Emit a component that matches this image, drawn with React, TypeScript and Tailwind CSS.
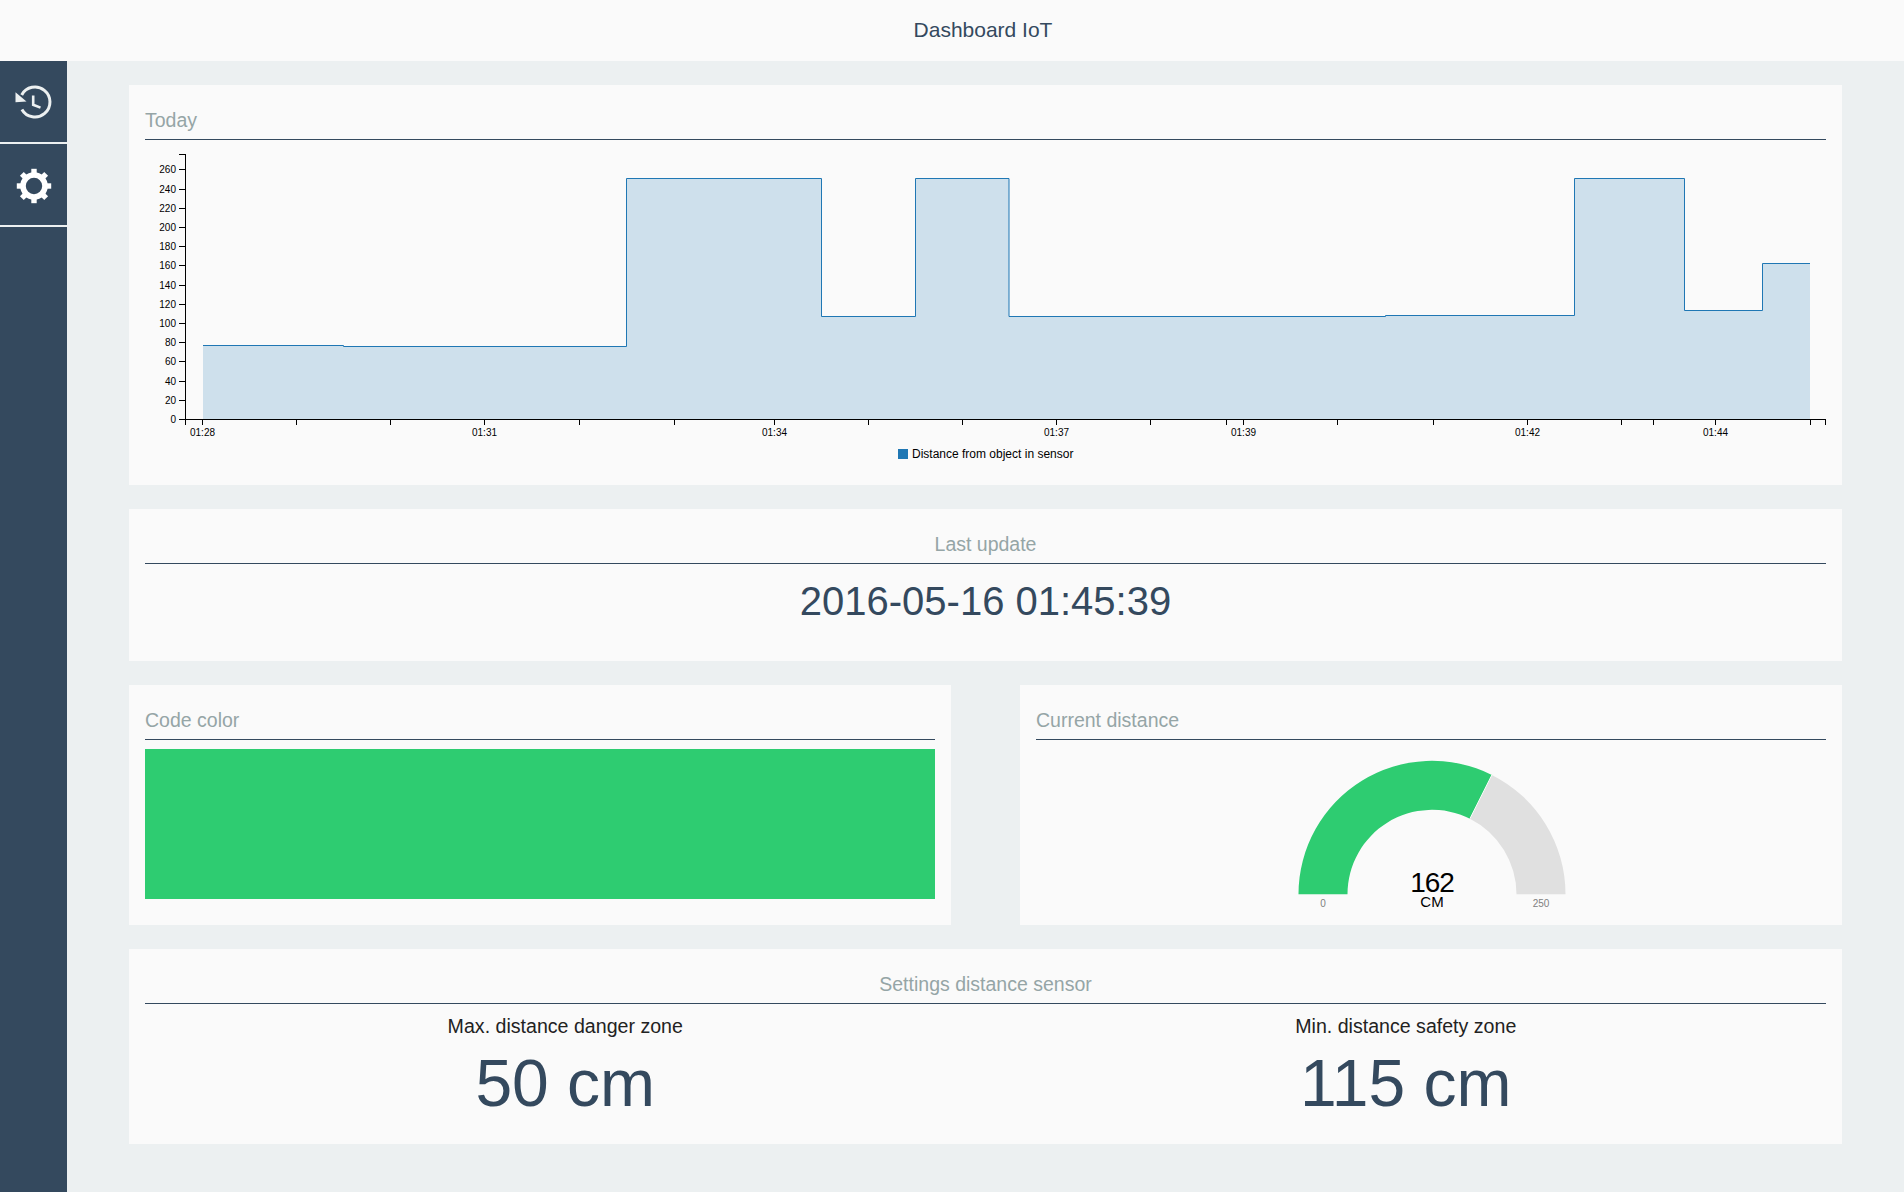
import React from "react";

const font = "font-['Liberation_Sans',Arial,sans-serif]";

// step series, in px relative to the chart svg (svg starts at x=145, y=140 on the page)
const points: [number, number][] = [
  [58, 205.5],
  [198.5, 205.5],
  [198.5, 206.5],
  [481.5, 206.5],
  [481.5, 38.5],
  [676.5, 38.5],
  [676.5, 176.5],
  [770.5, 176.5],
  [770.5, 38.5],
  [864, 38.5],
  [864, 176.5],
  [1240.5, 176.5],
  [1240.5, 175.5],
  [1429.5, 175.5],
  [1429.5, 38.5],
  [1539.5, 38.5],
  [1539.5, 170.5],
  [1617.5, 170.5],
  [1617.5, 123.5],
  [1665, 123.5],
];

const xTicks: { x: number; label?: string }[] = [
  { x: 57, label: "01:28" },
  { x: 151 },
  { x: 245 },
  { x: 339, label: "01:31" },
  { x: 434 },
  { x: 529 },
  { x: 629, label: "01:34" },
  { x: 723 },
  { x: 817 },
  { x: 911, label: "01:37" },
  { x: 1005 },
  { x: 1081 },
  { x: 1098, label: "01:39" },
  { x: 1192 },
  { x: 1288 },
  { x: 1382, label: "01:42" },
  { x: 1476 },
  { x: 1508 },
  { x: 1570, label: "01:44" },
  { x: 1665 },
];

const yValues = [0, 20, 40, 60, 80, 100, 120, 140, 160, 180, 200, 220, 240, 260];

function HistoryIcon() {
  return (
    <svg width="48" height="48" viewBox="0 0 48 48" fill="none" stroke="#ecf0f1">
      <path d="M11.7 17 A15 15 0 1 1 11.9 31.4" strokeWidth="3" />
      <path d="M5.5 14.2 L5.5 24.2 L16.5 23.5 Z" fill="#ecf0f1" stroke="none" />
      <path d="M23.2 17.5 V26.8 L30.5 29.6" strokeWidth="2.6" />
    </svg>
  );
}

function GearIcon() {
  const angles = [0, 45, 90, 135, 180, 225, 270, 315];
  return (
    <svg width="48" height="48" viewBox="0 0 48 48" fill="none" stroke="#fff">
      <circle cx="24" cy="25" r="11" strokeWidth="5.6" />
      {angles.map((a) => (
        <line
          key={a}
          x1="24"
          x2="24"
          y1="12.5"
          y2="7.8"
          strokeWidth="5.4"
          transform={`rotate(${a} 24 25)`}
        />
      ))}
    </svg>
  );
}

function CardTitle({ children, center }: { children: React.ReactNode; center?: boolean }) {
  return (
    <div className={`h-[55px] pt-[20px] border-b border-[#34495e] text-[19.5px] leading-[30px] text-[#95a5a6] ${center ? "text-center" : ""}`}>
      {children}
    </div>
  );
}

function Chart() {
  const line = points.map((p, i) => `${i === 0 ? "M" : "L"}${p[0]} ${p[1]}`).join(" ");
  const area = `${line} L1665 279 L58 279 Z`;
  return (
    <svg width="1681" height="345" className="block" fontFamily="'Liberation Sans', Arial, sans-serif">
      <path d={area} fill="#1f77b4" fillOpacity="0.2" stroke="none" />
      <path d={line} fill="none" stroke="#1f77b4" strokeWidth="1" />

      {/* y axis */}
      <path d="M34 14.5 H40.5 V279.5" fill="none" stroke="#000" shapeRendering="crispEdges" />
      {yValues.map((v) => {
        const y = Math.round(279 - v * 0.96) + 0.5;
        return (
          <g key={v}>
            <line x1="34" x2="40" y1={y} y2={y} stroke="#000" shapeRendering="crispEdges" />
            <text x="31" y={y + 3.5} fontSize="10" textAnchor="end" fill="#000">
              {v}
            </text>
          </g>
        );
      })}

      {/* x axis */}
      <path d="M40.5 285 V279.5 H1680.5 V285" fill="none" stroke="#000" shapeRendering="crispEdges" />
      {xTicks.map((t) => (
        <g key={t.x}>
          <line x1={t.x + 0.5} x2={t.x + 0.5} y1="279" y2="285" stroke="#000" shapeRendering="crispEdges" />
          {t.label && (
            <text x={t.x + 0.5} y="295.5" fontSize="10" textAnchor="middle" fill="#000">
              {t.label}
            </text>
          )}
        </g>
      ))}

      {/* legend */}
      <rect x="753" y="309" width="10" height="10" fill="#1f77b4" />
      <text x="767" y="318" fontSize="12" fill="#000">
        Distance from object in sensor
      </text>
    </svg>
  );
}

function Gauge() {
  const cx = 151;
  const cy = 154.3;
  const ro = 133.5;
  const ri = 84.5;
  const a = Math.PI * (1 - 162 / 250);
  const ox = cx + ro * Math.cos(a);
  const oy = cy - ro * Math.sin(a);
  const ix = cx + ri * Math.cos(a);
  const iy = cy - ri * Math.sin(a);
  return (
    <svg width="300" height="180" className="block mx-auto" fontFamily="'Liberation Sans', Arial, sans-serif">
      <path
        d={`M${ox} ${oy} A${ro} ${ro} 0 0 1 ${cx + ro} ${cy} L${cx + ri} ${cy} A${ri} ${ri} 0 0 0 ${ix} ${iy} Z`}
        fill="#e0e0e0"
      />
      <path
        d={`M${cx - ro} ${cy} A${ro} ${ro} 0 0 1 ${ox} ${oy} L${ix} ${iy} A${ri} ${ri} 0 0 0 ${cx - ri} ${cy} Z`}
        fill="#2ecc71"
      />
      <line x1={ox} y1={oy} x2={ix} y2={iy} stroke="#fafafa" strokeWidth="1" />
      <text x={cx} y="151.7" fontSize="28" letterSpacing="-1" textAnchor="middle" fill="#000">
        162
      </text>
      <text x={cx} y="166.7" fontSize="15" textAnchor="middle" fill="#000">
        CM
      </text>
      <text x="42" y="167" fontSize="10" textAnchor="middle" fill="#808080">
        0
      </text>
      <text x="260" y="167" fontSize="10" textAnchor="middle" fill="#808080">
        250
      </text>
    </svg>
  );
}

export default function App() {
  return (
    <div className={`min-h-[1192px] flex flex-col bg-[#ecf0f1] ${font}`}>
      <header className="h-[61px] bg-[#fafafa] pl-[67px] pb-[2px] flex items-center justify-center text-[21px] text-[#34495e]">
        <span className="-ml-[5px]">Dashboard IoT</span>
      </header>

      <div className="flex flex-1">
        <aside className="w-[67px] shrink-0 bg-[#34495e]">
          <div className="h-[83px] border-b-2 border-[#ecf0f1] flex items-center justify-center">
            <HistoryIcon />
          </div>
          <div className="h-[83px] border-b-2 border-[#ecf0f1] flex items-center justify-center">
            <GearIcon />
          </div>
        </aside>

        <main className="flex-1 px-[62px] pt-[24px] pb-[48px] flex flex-col gap-[24px]">
          <section className="bg-[#fafafa] px-4 h-[400px]">
            <CardTitle>Today</CardTitle>
            <Chart />
          </section>

          <section className="bg-[#fafafa] px-4 h-[152px]">
            <CardTitle center>Last update</CardTitle>
            <div className="text-center text-[40px] leading-[46px] pt-[14px] text-[#34495e]">2016-05-16 01:45:39</div>
          </section>

          <div className="grid grid-cols-2 gap-[69px]">
            <section className="bg-[#fafafa] px-4 h-[240px]">
              <CardTitle>Code color</CardTitle>
              <div className="mt-[9px] h-[150px] bg-[#2ecc71]" />
            </section>
            <section className="bg-[#fafafa] px-4 h-[240px]">
              <CardTitle>Current distance</CardTitle>
              <Gauge />
            </section>
          </div>

          <section className="bg-[#fafafa] px-4 h-[195px]">
            <CardTitle center>Settings distance sensor</CardTitle>
            <div className="grid grid-cols-2 text-center">
              <div>
                <div className="text-[19.6px] leading-[24px] mt-[10px] text-[#222]">Max. distance danger zone</div>
                <div className="text-[66px] leading-[74px] mt-[8px] text-[#34495e]">50 cm</div>
              </div>
              <div>
                <div className="text-[19.6px] leading-[24px] mt-[10px] text-[#222]">Min. distance safety zone</div>
                <div className="text-[66px] leading-[74px] mt-[8px] text-[#34495e]">115 cm</div>
              </div>
            </div>
          </section>
        </main>
      </div>
    </div>
  );
}
